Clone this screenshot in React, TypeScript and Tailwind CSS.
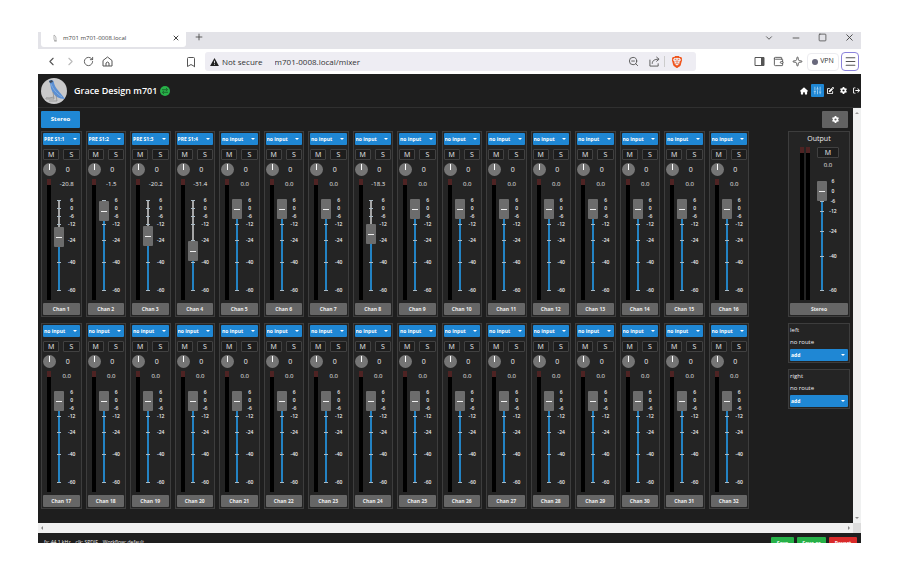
import React from 'react';
import {
  ChevronDown,
  ChevronLeft,
  ChevronRight,
  Bookmark,
  Menu,
  Minus,
  PanelRight,
  Plus,
  RotateCw,
  SlidersVertical,
  Sparkle,
  Square,
  Wallet,
  X,
  ZoomOut,
} from 'lucide-react';
import { FaArrowRightFromBracket, FaGear, FaHouse, FaPenToSquare } from 'react-icons/fa6';
import { SiBrave } from 'react-icons/si';

interface Channel {
  name: string;
  input: string;
  level: string;
  // thumb height above the -60 mark, 0 to 90
  position: number;
}

const patched: Record<number, Partial<Channel>> = {
  1: { input: 'PRE S1:1', level: '-20.8', position: 53 },
  2: { input: 'PRE S1:2', level: '-1.5', position: 79 },
  3: { input: 'PRE S1:3', level: '-20.2', position: 54 },
  4: { input: 'PRE S1:4', level: '-31.4', position: 39 },
  8: { level: '-18.3', position: 56 },
};

const channels: Channel[] = Array.from({ length: 32 }, (_, i) => ({
  name: `Chan ${i + 1}`,
  input: 'no input',
  level: '0.0',
  position: 81,
  ...patched[i + 1],
}));

const Dropdown: React.FC<{ label: string; value: string }> = ({ label, value }) => (
  <div className="relative h-3">
    <select
      aria-label={label}
      className="block h-3 w-full appearance-none rounded-[1px] bg-[#1f87d4] pl-px text-[5px] leading-3 font-bold text-white"
    >
      <option>{value}</option>
    </select>
    <svg viewBox="0 0 4 2" className="pointer-events-none absolute top-[5px] right-[3px] h-[2px] w-1 fill-white">
      <path d="M0 0h4L2 2z" />
    </svg>
  </div>
);

const SmallButton: React.FC<{ children: React.ReactNode }> = ({ children }) => (
  <button className="h-[11px] rounded-[1px] border border-[#414141] bg-[#1d1d1d] text-[7px] leading-[9px] text-[#eee]">
    {children}
  </button>
);

const NameButton: React.FC<{ children: React.ReactNode }> = ({ children }) => (
  <button className="mt-[3px] block h-3 w-full rounded-[1px] bg-[#666] text-[5px] leading-3 font-bold text-[#eee]">
    {children}
  </button>
);

const Meter: React.FC = () => (
  <div className="w-1 bg-black">
    <div className="h-[6px] bg-[#4e2323]" />
  </div>
);

const Fader: React.FC<{ label: string; travel: number; position: number; ticks: number[] }> = ({
  label,
  travel,
  position,
  ticks,
}) => {
  const thumb = 10 + travel - position;
  return (
    <div className="grid w-[10px]" style={{ height: travel + 20 }}>
      <svg width="10" height={travel + 20} className="[grid-area:1/1]">
        <rect x="4" y="10" width="2" height={thumb - 10} fill="#a5a5a5" />
        <rect x="4" y={thumb} width="2" height={travel + 10 - thumb} fill="#2383c4" />
        {ticks.map((y) => (
          <rect key={y} x="3" y={y} width="4" height="1" fill="#a9bac5" />
        ))}
      </svg>
      <input
        type="range"
        aria-label={label}
        min={0}
        max={travel}
        defaultValue={position}
        className="m-0 h-full w-[10px] appearance-none bg-transparent [direction:rtl] [grid-area:1/1] [writing-mode:vertical-lr] [&::-webkit-slider-thumb]:h-5 [&::-webkit-slider-thumb]:w-[10px] [&::-webkit-slider-thumb]:appearance-none [&::-webkit-slider-thumb]:rounded-[1px] [&::-webkit-slider-thumb]:bg-[#6c6c6c] [&::-webkit-slider-thumb]:bg-[linear-gradient(#eee,#eee)] [&::-webkit-slider-thumb]:bg-[length:6px_1px] [&::-webkit-slider-thumb]:bg-center [&::-webkit-slider-thumb]:bg-no-repeat"
      />
    </div>
  );
};

const ChannelStrip: React.FC<{ channel: Channel }> = ({ channel }) => (
  <div className="border border-[#3d3d3d] bg-[#242424] p-px">
    <Dropdown label={`${channel.name} input`} value={channel.input} />
    <div className="mt-1 grid grid-cols-2 gap-1">
      <SmallButton>M</SmallButton>
      <SmallButton>S</SmallButton>
    </div>
    <div className="mt-[3px] flex items-center">
      <input
        type="range"
        aria-label={`${channel.name} pan`}
        className="m-0 h-[13px] w-[13px] appearance-none rounded-full bg-[#757575] [&::-webkit-slider-thumb]:mb-[6px] [&::-webkit-slider-thumb]:h-[6px] [&::-webkit-slider-thumb]:w-px [&::-webkit-slider-thumb]:appearance-none [&::-webkit-slider-thumb]:bg-white"
      />
      <span className="flex-1 text-center text-[7px] leading-[13px]">0</span>
    </div>
    <div className="mt-[3px] flex h-[121px]">
      <div className="ml-1 flex">
        <Meter />
      </div>
      <div className="ml-[3px] flex-1">
        <div className="text-center text-[6px] leading-[11px]">{channel.level}</div>
        <div className="flex">
          <Fader
            label={`${channel.name} level`}
            travel={90}
            position={channel.position}
            ticks={[10, 18, 26, 34, 50, 72, 100]}
          />
          <div className="flex-1 pt-[6px] text-center text-[5px] leading-[8px] font-semibold">
            <div>6</div>
            <div>0</div>
            <div>-6</div>
            <div>-12</div>
            <div className="mt-2">-24</div>
            <div className="mt-[14px]">-40</div>
            <div className="mt-5">-60</div>
          </div>
        </div>
      </div>
    </div>
    <NameButton>{channel.name}</NameButton>
  </div>
);

const OutputStrip: React.FC = () => (
  <div className="border border-[#3d3d3d] bg-[#242424] p-px">
    <div className="text-center text-[7px] leading-3">Output</div>
    <div className="mt-[2px] flex h-[153px]">
      <div className="ml-[10px] flex gap-[2px]">
        <Meter />
        <Meter />
      </div>
      <div className="ml-[7px] w-[22px]">
        <div className="grid">
          <SmallButton>M</SmallButton>
        </div>
        <div className="mt-[2px] text-center text-[6px] leading-[11px]">0.0</div>
        <div className="flex">
          <Fader label="Output level" travel={109} position={99} ticks={[10, 20, 30, 40, 60, 85, 119]} />
          <div className="flex-1 pt-[5px] text-center text-[5px] leading-[10px] font-semibold">
            <div>6</div>
            <div>0</div>
            <div>-6</div>
            <div>-12</div>
            <div className="mt-[10px]">-24</div>
            <div className="mt-[15px]">-40</div>
            <div className="mt-6">-60</div>
          </div>
        </div>
      </div>
    </div>
    <NameButton>Stereo</NameButton>
  </div>
);

const RoutePanel: React.FC<{ side: string }> = ({ side }) => (
  <div className="mt-[6px] border border-[#3d3d3d] bg-[#242424] p-px text-[6px] leading-[10px]">
    <div>{side}</div>
    <div className="my-[2px]">no route</div>
    <Dropdown label={`${side} route`} value="add" />
  </div>
);

const BrowserBar: React.FC = () => (
  <>
    <div className="flex h-[17px] items-start bg-[#e3e3e8] pl-[3px] text-[#444]">
      <div className="flex h-[15px] w-[145px] items-center rounded-b-[3px] bg-white pr-[6px] pb-[4px] pl-[11px]">
        <svg viewBox="0 0 6 8" className="h-2 w-[6px] fill-none stroke-[#999]">
          <path d="M2 1v4q0 2 2 2V4q0-2-2-3M2 7h3" strokeWidth=".7" />
        </svg>
        <span className="ml-[5px] flex-1 text-[6px] leading-[10px] font-medium">m701 m701-0008.local</span>
        <button aria-label="Close tab">
          <X size={8} strokeWidth={3} />
        </button>
      </div>
      <button aria-label="New tab" className="ml-2">
        <Plus size={10} />
      </button>
      <div className="ml-auto flex items-center gap-[17px] pr-[6px]">
        <button aria-label="Tab list"><ChevronDown size={10} /></button>
        <button aria-label="Minimize"><Minus size={10} /></button>
        <button aria-label="Maximize"><Square size={9} /></button>
        <button aria-label="Close"><X size={11} /></button>
      </div>
    </div>
    <div className="flex h-[25px] items-center bg-white pr-[2px] pl-[7px] text-[#555]">
      <button aria-label="Back"><ChevronLeft size={13} /></button>
      <button aria-label="Forward" className="ml-[6px] text-[#bbb]"><ChevronRight size={13} /></button>
      <button aria-label="Reload" className="ml-[6px]"><RotateCw size={11} /></button>
      <button aria-label="Home" className="ml-2">
        <svg viewBox="0 0 11 11" className="h-[11px] w-[11px] fill-none stroke-current">
          <path d="M1 4.500L5.500 1 10 4.500V10H1zM4 10V7q1.500-2 3 0v3" />
        </svg>
      </button>
      <button aria-label="Bookmark" className="ml-[72px]"><Bookmark size={12} /></button>
      <div className="ml-2 flex h-[19px] flex-1 items-center rounded-[3px] bg-[#eeedf3] px-[5px]">
        <svg viewBox="0 0 10 9" className="h-2 w-[9px]">
          <path d="M5 0L10 9H0z" fill="#222" />
          <path d="M4.500 3h1v3h-1zM4.500 7h1v1h-1z" fill="#eee" />
        </svg>
        <span className="ml-[3px] text-[8px] text-[#333]">Not secure</span>
        <input
          aria-label="Address"
          defaultValue="m701-0008.local/mixer"
          className="ml-[12px] min-w-0 flex-1 bg-transparent text-[8px] text-[#333]"
        />
        <button aria-label="Zoom out"><ZoomOut size={11} /></button>
        <button aria-label="Share" className="ml-[10px]">
          <svg viewBox="0 0 12 12" className="h-[11px] w-[11px] fill-none stroke-current">
            <path d="M1 4v7h9V8M3.500 8.500C3.500 5 6 3.500 10.500 3.500M8 1l3 2.500L8 6" />
          </svg>
        </button>
        <div className="ml-1 h-[11px] w-px bg-[#ccc]" />
        <button aria-label="Brave Shields" className="ml-[6px] text-[#f0561d]"><SiBrave size={12} /></button>
        <div className="w-2" />
      </div>
      <button aria-label="Sidebar" className="ml-[58px]">
        <svg viewBox="0 0 11 11" className="h-[11px] w-[11px] fill-none stroke-current">
          <path d="M1 1.500h9v8H1z" />
          <path d="M7 2h3v7H7z" className="fill-current stroke-none" />
        </svg>
      </button>
      <button aria-label="Wallet" className="ml-2"><Wallet size={11} /></button>
      <button aria-label="Leo" className="ml-2"><Sparkle size={11} /></button>
      <button className="ml-1 flex h-[18px] w-[32px] items-center justify-center gap-[2px] rounded-[4px] border border-[#ececf0] text-[7px] text-[#333]">
        <span className="h-[6px] w-[6px] rounded-full bg-[#68687c]" />
        VPN
      </button>
      <button
        aria-label="Menu"
        className="ml-[2px] flex h-[19px] w-[18px] items-center justify-center rounded-[4px] border border-[#8b83dc]"
      >
        <Menu size={13} />
      </button>
    </div>
  </>
);

const Header: React.FC = () => (
  <header className="flex h-[34px] items-center overflow-hidden border-b border-[#303030] pl-[3px]">
    <svg viewBox="0 0 26 26" className="h-[26px] w-[26px]">
      <circle cx="13" cy="13" r="13" fill="#c9c9ca" />
      <path d="M8 3c2-2 5-1 5 2 1 5 6 9 11 16-6 0-11-3-13-8C9 9 10 6 8 3z" fill="#5b8fd3" />
      <path d="M10 6c2 5 5 9 11 13" fill="none" stroke="#84afe0" />
      <path d="M8 3l3-1 1 2-3 1z" fill="#394657" />
      <path d="M12 14l1 7H5q-1-2 3-1l5-1M15 17l1 6H8" fill="none" stroke="#888" strokeWidth=".7" />
    </svg>
    <h1 className="ml-[7px] text-[9px] font-semibold text-white">Grace Design m701</h1>
    <svg viewBox="0 0 10 10" className="ml-[3px] h-[10px] w-[10px]">
      <circle cx="5" cy="5" r="5" fill="#27b148" />
      <path d="M2 3.700h5M6 2l1.700 1.700L6 5M8 6.300H3M4 5L2.300 6.300 4 8" fill="none" stroke="#174d25" strokeWidth=".7" />
    </svg>
    <nav className="ml-auto flex items-center text-white">
      <a href="#home" aria-label="Home"><FaHouse size={8} /></a>
      <a href="#mixer" aria-label="Mixer" className="ml-[3px] rounded-[1px] bg-[#1f87d4] p-[2px] text-[#b5dbf5]">
        <SlidersVertical size={9} />
      </a>
      <a href="#edit" aria-label="Edit" className="ml-[3px]"><FaPenToSquare size={7} /></a>
      <a href="#settings" aria-label="Settings" className="ml-[6px]"><FaGear size={7} /></a>
      <a href="#logout" aria-label="Log out" className="mr-[1px] ml-[6px]"><FaArrowRightFromBracket size={7} /></a>
    </nav>
  </header>
);

const App: React.FC = () => (
  <div className="bg-white pt-8 pr-[39px] pl-[38px] font-['Open_Sans','Noto_Sans',sans-serif]">
    <BrowserBar />
    <div className="bg-[#1e1e1e] text-[#eee]">
      <Header />
      <div className="flex">
        <main className="flex-1 px-[3px] pt-[3px] pb-[14px]">
          <div className="flex justify-between pr-[2px]">
            <button className="h-[17px] w-[39px] rounded-[1px] bg-[#1f87d4] text-[6px] font-bold text-white">Stereo</button>
            <button aria-label="Mixer settings" className="flex h-[17px] w-[26px] items-center justify-center rounded-[1px] bg-[#626262] text-white">
              <FaGear size={7} />
            </button>
          </div>
          <div className="mt-[3px] flex gap-[39px]">
            <div className="grid flex-1 grid-cols-16 gap-x-1 gap-y-[6px]">
              {channels.map((channel) => (
                <ChannelStrip key={channel.name} channel={channel} />
              ))}
            </div>
            <aside className="w-[62px]">
              <OutputStrip />
              <RoutePanel side="left" />
              <RoutePanel side="right" />
            </aside>
          </div>
        </main>
        <div className="flex w-2 flex-col items-center justify-between bg-[#f0f1f1] py-1">
          <svg viewBox="0 0 4 2" className="h-[2px] w-1 fill-[#999]"><path d="M0 2h4L2 0z" /></svg>
          <svg viewBox="0 0 4 2" className="h-[2px] w-1 fill-[#888]"><path d="M0 0h4L2 2z" /></svg>
        </div>
      </div>
      <div className="flex h-[10px] bg-[#f0f0f0]">
        <div className="flex flex-1 items-center justify-between px-[3px]">
          <svg viewBox="0 0 2 4" className="h-1 w-[2px] fill-[#888]"><path d="M2 0v4L0 2z" /></svg>
          <svg viewBox="0 0 2 4" className="h-1 w-[2px] fill-[#888]"><path d="M0 0v4l2-2z" /></svg>
        </div>
        <div className="w-2 bg-[#dcdcdc]" />
      </div>
      <footer className="flex h-[10px] items-start overflow-hidden pr-1 pl-[6px] text-[5px] text-[#eee]">
        <div className="flex gap-[5px] pt-[5px] leading-[8px]">
          <span>fs: 44.1 kHz</span>
          <span>clk: SPDIF</span>
          <span>Workflow: default</span>
        </div>
        <div className="ml-auto flex gap-[3px] pt-1 leading-[12px] font-bold text-white">
          <button className="h-3 w-[23px] rounded-[1px] bg-[#27b148]">Save</button>
          <button className="h-3 w-[29px] rounded-[1px] bg-[#27b148]">Save as</button>
          <button className="h-3 w-[28px] rounded-[1px] bg-[#d92a2a]">Revert</button>
        </div>
      </footer>
    </div>
  </div>
);

export default App;
